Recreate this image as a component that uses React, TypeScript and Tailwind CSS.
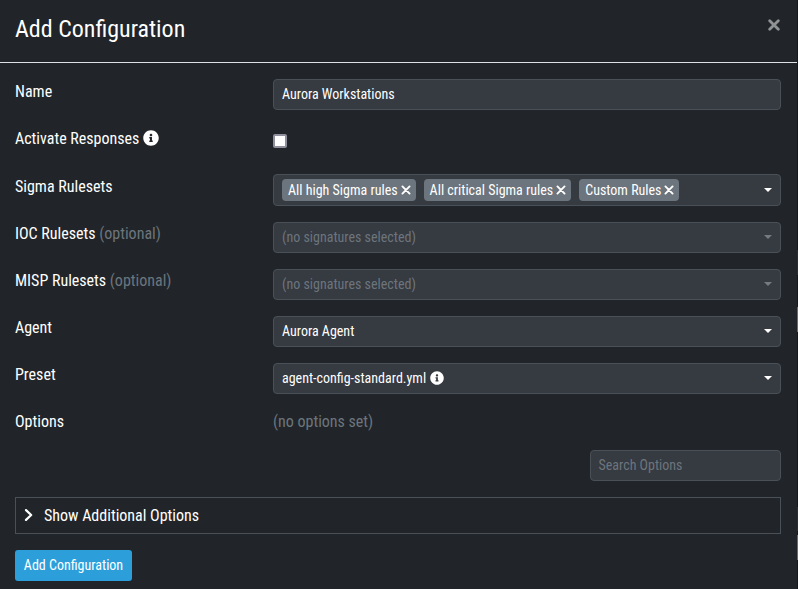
import type { ReactNode } from "react";
import { FaInfoCircle } from "react-icons/fa";

const field =
  "flex w-full items-center rounded-[4px] border border-[#495057] bg-[#363a41] px-2 text-sm leading-[21px]";

function Row({
  label,
  optional,
  low,
  children,
}: {
  label: ReactNode;
  optional?: boolean;
  low?: boolean;
  children: ReactNode;
}) {
  return (
    <div className="flex">
      <div className={"w-[258px] shrink-0 leading-6 " + (low ? "pt-px" : "")}>
        {label}
        {optional && <span className="text-[#6c757d]"> (optional)</span>}
      </div>
      <div className="min-w-0 flex-1">{children}</div>
    </div>
  );
}

function Caret({ muted }: { muted?: boolean }) {
  return (
    <span
      className={
        "mb-px ml-auto h-0 w-0 border-x-4 border-t-4 border-x-transparent " +
        (muted ? "border-t-[#777a80]" : "border-t-white")
      }
    />
  );
}

function Cross({ className, stroke }: { className: string; stroke: number }) {
  return (
    <svg viewBox="0 0 12 12" className={className} fill="none" stroke="currentColor" strokeWidth={stroke} strokeLinecap="round">
      <path d="M1.7 1.7 10.3 10.3M10.3 1.7 1.7 10.3" />
    </svg>
  );
}

function Tag({ children }: { children: ReactNode }) {
  return (
    <span className="mr-2 flex h-[22px] items-center rounded-[4px] bg-[#6c757d] px-1.5">
      {children}
      <Cross className="-mr-px ml-[3px] h-[10px] w-[10px]" stroke={2.3} />
    </span>
  );
}

export default function App() {
  return (
    <div className="flex h-[589px] w-[798px] overflow-hidden bg-[#16181b] font-['Roboto_Condensed',Roboto,sans-serif] text-base text-white">
      <div className="w-[797px] bg-[#212529]">
        <header className="flex h-[63px] justify-between border-b border-[#dee2e6] pl-[15px] pr-[17px]">
          <h1 className="pt-[11px] text-2xl leading-9">Add Configuration</h1>
          <button className="mt-[19px] h-3 text-[#909294]" aria-label="Close">
            <Cross className="h-3 w-3" stroke={2.8} />
          </button>
        </header>
        <main className="flex flex-col gap-4 pl-[15px] pr-4 pt-4">
          <Row label="Name" low>
            <div className={field + " h-[31px]"}>Aurora Workstations</div>
          </Row>
          <div className="h-8">
            <Row
              low
              label={
                <span className="flex items-center gap-1">
                  Activate Responses <FaInfoCircle className="mb-0.5 h-4 w-4" />
                </span>
              }
            >
              <div className="mt-2 h-3.5 w-3.5 rounded-[2px] border-2 border-[#8f8f9d] bg-white" />
            </Row>
          </div>
          <Row label="Sigma Rulesets" low>
            <div className={field + " h-8"}>
              <Tag>All high Sigma rules</Tag>
              <Tag>All critical Sigma rules</Tag>
              <Tag>Custom Rules</Tag>
              <Caret />
            </div>
          </Row>
          <Row label="IOC Rulesets" optional>
            <div className={field + " h-[31px] text-[#6c757d]"}>
              (no signatures selected)
              <Caret muted />
            </div>
          </Row>
          <Row label="MISP Rulesets" optional>
            <div className={field + " h-[31px] text-[#6c757d]"}>
              (no signatures selected)
              <Caret muted />
            </div>
          </Row>
          <Row label="Agent">
            <div className={field + " h-[31px]"}>
              Aurora Agent
              <Caret />
            </div>
          </Row>
          <Row label="Preset">
            <div className={field + " h-[31px]"}>
              agent-config-standard.yml
              <FaInfoCircle className="mb-px ml-1 h-3.5 w-3.5" />
              <Caret />
            </div>
          </Row>
          <Row label="Options">
            <div className="leading-6 text-[#6c757d]">(no options set)</div>
          </Row>
          <div className="flex justify-end">
            <div className="flex h-[31px] w-[191px] items-center rounded-[4px] border border-[#495057] bg-[#363a41] px-[7.5px] pb-px text-sm text-[#6c757d]">
              Search Options
            </div>
          </div>
          <div className="flex h-[37px] items-center border border-[#495057] pl-2">
            <svg
              viewBox="0 0 9 12"
              className="mb-px mr-[11px] h-3 w-[9px]"
              fill="none"
              stroke="currentColor"
              strokeWidth="2.2"
              strokeLinecap="round"
              strokeLinejoin="round"
            >
              <path d="M2 1.1 7.2 6 2 10.9" />
            </svg>
            Show Additional Options
          </div>
          <button className="h-[31px] w-[117px] rounded-[3px] bg-[#2c9fdb] pb-px text-sm">Add Configuration</button>
        </main>
      </div>
      <div className="w-px">
        <div className="mt-[250px] h-[25px] bg-[#2b2d30]" />
        <div className="mt-8 h-[25px] bg-[#6a6a6a]" />
        <div className="mt-[175px] h-[24px] bg-[#2b2d30]" />
        <div className="mt-1 h-[25px] bg-[#6a6a6a]" />
      </div>
    </div>
  );
}
